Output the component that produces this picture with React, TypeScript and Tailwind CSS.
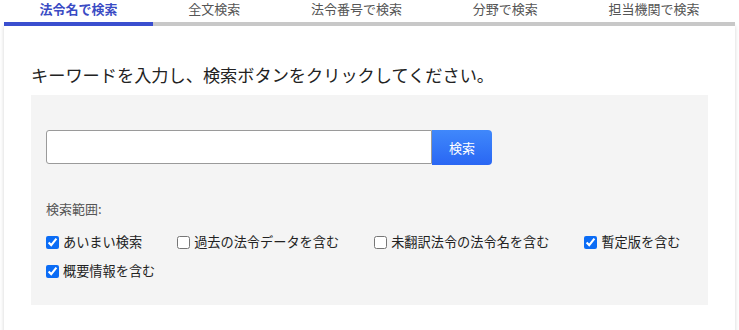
import React, { useState } from 'react';

const tabs = ['法令名で検索', '全文検索', '法令番号で検索', '分野で検索', '担当機関で検索'];

const options = [
  { label: 'あいまい検索', checked: true },
  { label: '過去の法令データを含む', checked: false },
  { label: '未翻訳法令の法令名を含む', checked: false },
  { label: '暫定版を含む', checked: true },
  { label: '概要情報を含む', checked: true },
];

export default function App() {
  const [active, setActive] = useState(0);
  const [keyword, setKeyword] = useState('');
  const [checks, setChecks] = useState(options.map((o) => o.checked));

  return (
    <div
      className="w-[739px] h-[330px] overflow-hidden bg-white"
      style={{ fontFamily: '"Noto Sans CJK JP", "Noto Sans", sans-serif' }}
    >
      <div className="ml-[4px] w-[731px]">
        <div className="flex">
          {tabs.map((t, i) => (
            <button
              key={t}
              onClick={() => setActive(i)}
              className={
                i === active
                  ? 'flex-auto text-center text-[13px] leading-[16px] pt-[1px] pb-[5px] border-b-4 border-[#3a4fcf] text-[#3a4bc4] font-bold'
                  : 'flex-auto text-center text-[13px] leading-[16px] pt-[1px] pb-[5px] border-b-4 border-[#c8c8c8] text-[#555]'
              }
            >
              {t}
            </button>
          ))}
        </div>
        <div className="shadow-[0_0_4px_rgba(0,0,0,0.18)] pl-[27px] pr-[27px] pt-[37px] pb-[40px]">
          <p className="text-[17.2px] leading-[24px] text-[#222] mb-[8px]">
            キーワードを入力し、検索ボタンをクリックしてください。
          </p>
          <div className="bg-[#f4f4f4] px-[15px] pt-[35px] pb-[24px]">
            <div className="flex w-[446px]">
              <input
                value={keyword}
                onChange={(e) => setKeyword(e.target.value)}
                className="flex-1 h-[34px] bg-white border border-[#9a9a9a] rounded-l-[3px] px-2 text-[14px] outline-none"
              />
              <button className="w-[60px] h-[35px] rounded-r-[4px] bg-linear-to-b from-[#4088fb] to-[#2a66f3] text-white text-[13px]">
                検索
              </button>
            </div>
            <div className="mt-[35px] text-[13px] leading-[18px] text-[#555]">検索範囲:</div>
            <div className="mt-[14px] flex flex-wrap gap-x-[35px] gap-y-[9px]">
              {options.map((o, i) => (
                <label key={o.label} className="flex items-center h-[20px] text-[13.2px] text-[#222]">
                  <input
                    type="checkbox"
                    checked={checks[i]}
                    onChange={() => setChecks(checks.map((c, j) => (j === i ? !c : c)))}
                    className="w-[13px] h-[13px] m-0 accent-[#0b6cf5]"
                  />
                  <span className="ml-[4px]">{o.label}</span>
                </label>
              ))}
            </div>
          </div>
        </div>
      </div>
    </div>
  );
}
